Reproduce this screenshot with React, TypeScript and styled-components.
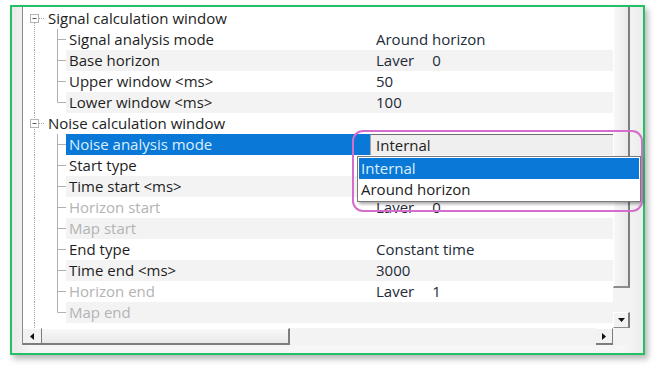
import React from "react"
import styled, { createGlobalStyle } from "styled-components"

const GlobalStyle = createGlobalStyle`
  body {
    margin: 0;
    background: #fff;
    font-family: "Open Sans", "Noto Sans", sans-serif;
  }
`

type RowData =
  | { kind: "cat"; text: string; first?: boolean }
  | {
      kind: "item"
      text: string
      value?: string
      layer?: string
      last?: boolean
      disabled?: boolean
      selected?: boolean
    }

// values under the open dropdown are hidden in the shot, so left empty
const rows: RowData[] = [
  { kind: "cat", text: "Signal calculation window", first: true },
  { kind: "item", text: "Signal analysis mode", value: "Around horizon" },
  { kind: "item", text: "Base horizon", layer: "0" },
  { kind: "item", text: "Upper window <ms>", value: "50" },
  { kind: "item", text: "Lower window <ms>", value: "100", last: true },
  { kind: "cat", text: "Noise calculation window" },
  { kind: "item", text: "Noise analysis mode", value: "Internal", selected: true },
  { kind: "item", text: "Start type" },
  { kind: "item", text: "Time start <ms>" },
  { kind: "item", text: "Horizon start", layer: "0", disabled: true },
  { kind: "item", text: "Map start", disabled: true },
  { kind: "item", text: "End type", value: "Constant time" },
  { kind: "item", text: "Time end <ms>", value: "3000" },
  { kind: "item", text: "Horizon end", layer: "1", disabled: true },
  { kind: "item", text: "Map end", disabled: true, last: true },
  { kind: "cat", text: "Scaling" },
]

const TreeLines: React.FC<{ row: RowData }> = ({ row }) => {
  if (row.kind === "cat") {
    return (
      <svg width="25" height="21">
        <line x1="11.5" y1={row.first ? 15 : 0} x2="11.5" y2="21" stroke="#a8a8a8" strokeDasharray="1 1" />
        <rect x="7.5" y="6.5" width="8" height="8" fill="#fff" stroke="#b4b4b4" />
        <line x1="9.5" y1="10.5" x2="13.5" y2="10.5" stroke="#555" />
        <line x1="16" y1="10.5" x2="22" y2="10.5" stroke="#a8a8a8" strokeDasharray="1 1" />
      </svg>
    )
  }
  return (
    <svg width="43" height="21">
      <line x1="11.5" y1="0" x2="11.5" y2="21" stroke="#a8a8a8" strokeDasharray="1 1" />
      <line x1="34.5" y1="0" x2="34.5" y2={row.last ? 10.5 : 21} stroke="#b0b0b0" />
      <line x1="34.5" y1="10.5" x2="43" y2="10.5" stroke="#b0b0b0" />
    </svg>
  )
}

export default function App() {
  return (
    <>
      <GlobalStyle />
      <Page>
        <Frame>
          <Control>
            <List>
              {rows.map((row, i) => {
                const striped = row.kind === "item" && i % 2 === 0 && !row.selected
                return (
                  <Row key={i}>
                    <Gutter>
                      <TreeLines row={row} />
                    </Gutter>
                    {row.kind === "cat" ? (
                      <Category>{row.text}</Category>
                    ) : (
                      <>
                        <Label $striped={striped} $disabled={row.disabled} $selected={row.selected}>
                          {row.text}
                        </Label>
                        {row.selected ? (
                          <Value $selected>
                            <Combo>{row.value}</Combo>
                          </Value>
                        ) : (
                          <Value $striped={striped}>
                            {row.layer ? (
                              <>
                                Laver<LayerNum>{row.layer}</LayerNum>
                              </>
                            ) : (
                              row.value
                            )}
                          </Value>
                        )}
                      </>
                    )}
                  </Row>
                )
              })}
            </List>
            <VScroll>
              <VThumb />
              <VTrack />
              <ArrowButton>
                <svg width="7" height="4">
                  <polygon points="0,0 7,0 3.5,4" fill="#111" />
                </svg>
              </ArrowButton>
            </VScroll>
            <HScroll>
              <HButton>
                <svg width="4" height="7">
                  <polygon points="4,0 4,7 0,3.5" fill="#111" />
                </svg>
              </HButton>
              <HThumb />
              <HTrack />
              <HButton>
                <svg width="4" height="7">
                  <polygon points="0,0 0,7 4,3.5" fill="#111" />
                </svg>
              </HButton>
            </HScroll>
            <Corner />
          </Control>

          <Dropdown>
            <Option $active>Internal</Option>
            <Option>Around horizon</Option>
          </Dropdown>
          <Highlight />
        </Frame>
      </Page>
    </>
  )
}

const Page = styled.div`
  width: 656px;
  height: 370px;
  box-sizing: border-box;
  padding: 5px 0 0 10px;
`

const Frame = styled.div`
  position: relative;
  display: flex;
  width: 635px;
  height: 350px;
  box-sizing: border-box;
  padding: 0 13px 8px 10px;
  border: 2px solid #23c164;
  background: linear-gradient(to right, #e9e9e9, #f6f6f6 3%, #f6f6f6 97%, #ececec);
  box-shadow: 3px 4px 6px rgba(0, 0, 0, 0.28);
`

const Control = styled.div`
  flex: 1;
  display: grid;
  grid-template-columns: 1fr 17px;
  grid-template-rows: 1fr 17px;
  border-left: 1px solid #8a8a8a;
  background: #fff;
`

const List = styled.div`
  overflow: hidden;
  padding-top: 1px;
`

const Row = styled.div`
  display: flex;
  height: 21px;
  line-height: 21px;
  font-size: 15px;
  white-space: nowrap;
`

const Gutter = styled.div`
  flex: none;
  display: flex;
`

const Category = styled.div`
  flex: 1;
  color: #222;
`

const Label = styled.div<{ $striped?: boolean; $disabled?: boolean; $selected?: boolean }>`
  flex: none;
  width: 286px;
  box-sizing: border-box;
  padding-left: 3px;
  color: ${(p) => (p.$selected ? "#dcefff" : p.$disabled ? "#b3b3b3" : "#1e1e1e")};
  background: ${(p) => (p.$selected ? "#0a78d7" : p.$striped ? "#f3f3f3" : "transparent")};
`

const Value = styled.div<{ $striped?: boolean; $selected?: boolean }>`
  flex: 1;
  display: flex;
  padding-left: ${(p) => (p.$selected ? "18px" : "24px")};
  color: #232b38;
  background: ${(p) => (p.$selected ? "#0a78d7" : p.$striped ? "#f3f3f3" : "transparent")};
`

const LayerNum = styled.span`
  margin-left: 18px;
`

const Combo = styled.div`
  flex: 1;
  box-sizing: border-box;
  padding-left: 5px;
  line-height: 20px;
  background: #efefef;
  border-top: 1px solid #6e6e6e;
  border-left: 1px solid #a5a5a5;
  color: #222;
`

const VScroll = styled.div`
  display: flex;
  flex-direction: column;
  background: #f3f3f3;
`

const VThumb = styled.div`
  height: 281px;
  box-sizing: border-box;
  background: linear-gradient(to right, #f8f8f8, #e9e9e9);
  border-left: 1px solid #fff;
  border-right: 2px solid #7d7d7d;
  border-bottom: 2px solid #8d8d8d;
`

const VTrack = styled.div`
  flex: 1;
`

const ArrowButton = styled.div`
  height: 16px;
  box-sizing: border-box;
  display: flex;
  align-items: center;
  justify-content: center;
  background: #f2f2f2;
  border-left: 1px solid #fff;
  border-top: 1px solid #fff;
  border-right: 2px solid #7d7d7d;
  border-bottom: 1px solid #8d8d8d;
`

const HScroll = styled.div`
  display: flex;
  background: #f3f3f3;
`

const HButton = styled.div`
  width: 17px;
  box-sizing: border-box;
  display: flex;
  align-items: center;
  justify-content: center;
  background: #f2f2f2;
  border-top: 1px solid #fff;
  border-right: 1px solid #7d7d7d;
  border-bottom: 2px solid #7d7d7d;

  &:first-child {
    width: 19px;
  }
`

const HThumb = styled.div`
  width: 248px;
  box-sizing: border-box;
  background: linear-gradient(#f8f8f8, #e9e9e9);
  border-top: 1px solid #fff;
  border-right: 2px solid #7d7d7d;
  border-bottom: 2px solid #7d7d7d;
`

const HTrack = styled.div`
  flex: 1;
`

const Corner = styled.div`
  background: #f3f3f3;
`

const Dropdown = styled.div`
  position: absolute;
  left: 345px;
  top: 149px;
  width: 284px;
  box-sizing: border-box;
  padding: 1px;
  background: #fff;
  border: 1px solid #7a7a7a;
  box-shadow: 2px 2px 3px rgba(0, 0, 0, 0.35);
  font-size: 15px;
`

const Option = styled.div<{ $active?: boolean }>`
  height: 21px;
  line-height: 21px;
  padding-left: 2px;
  color: ${(p) => (p.$active ? "#dcefff" : "#222")};
  background: ${(p) => (p.$active ? "#0a78d7" : "#fff")};
`

const Highlight = styled.div`
  position: absolute;
  left: 340px;
  top: 123px;
  width: 291px;
  height: 82px;
  box-sizing: border-box;
  border: 2px solid #d46ecd;
  border-radius: 11px;
  pointer-events: none;
`
